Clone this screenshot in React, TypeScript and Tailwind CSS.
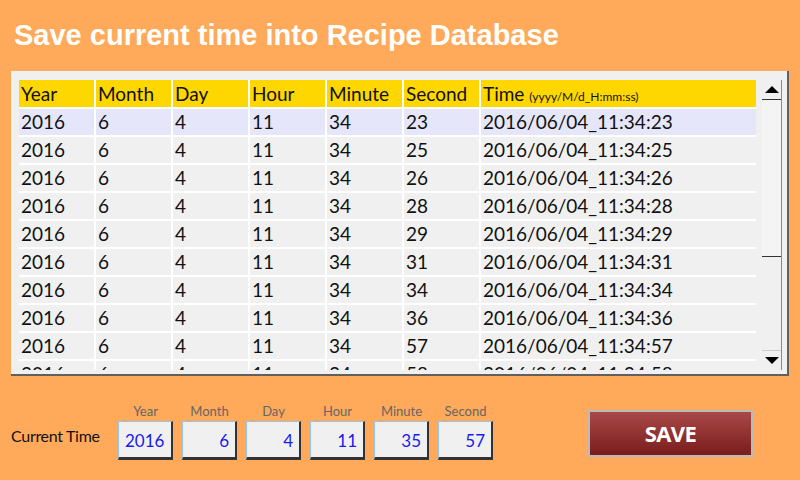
const rows = [23, 25, 26, 28, 29, 31, 34, 36, 57, 58];
const cols = ["Year", "Month", "Day", "Hour", "Minute", "Second"];
const current = [
  ["Year", "2016", "text-left"],
  ["Month", "6", "text-right"],
  ["Day", "4", "text-right"],
  ["Hour", "11", "text-right"],
  ["Minute", "35", "text-right"],
  ["Second", "57", "text-right"],
];

export default function App() {
  return (
    <div className="w-[800px] h-[480px] bg-[#ffaa5a] overflow-hidden" style={{ fontFamily: "Lato, 'Open Sans', sans-serif" }}>
      <h1 className="pl-[14px] pt-[18px] h-[71px] text-[29px] font-bold text-white leading-[34px]" style={{ fontFamily: "'Liberation Sans', Arial, sans-serif" }}>
        Save current time into Recipe Database
      </h1>
      <div className="mx-[11px] h-[305px] bg-[#f0f0f0] border-r-2 border-b-2 border-[#606060] flex pl-[8px] pt-[9px]">
        <div className="w-[737px] h-[290px] overflow-hidden">
          <div className="flex h-[27px] bg-[#ffd700] text-[19px] text-[#111]">
            {cols.map((c) => (
              <div key={c} className="w-[77px] border-r-2 border-white pl-[2px] leading-[27px]">{c}</div>
            ))}
            <div className="flex-1 pl-[2px] leading-[27px]">
              Time <span className="text-[12px]">(yyyy/M/d_H:mm:ss)</span>
            </div>
          </div>
          {rows.map((s, i) => (
            <div key={s} className={`flex h-[28px] border-t-2 border-white text-[19px] text-[#111] ${i === 0 ? "bg-[#e6e6fa]" : ""}`}>
              {["2016", "6", "4", "11", "34", String(s)].map((v, j) => (
                <div key={j} className="w-[77px] border-r-2 border-white pl-[2px] leading-[26px]">{v}</div>
              ))}
              <div className="flex-1 pl-[2px] leading-[26px]">2016/06/04_11:34:{s}</div>
            </div>
          ))}
        </div>
        <div className="ml-[6px] w-[20px] h-[290px] flex flex-col border-r border-[#888]">
          <div className="h-[20px] bg-[#f0f0f0] border-b border-[#333] flex items-center justify-center">
            <div className="w-0 h-0 border-l-[7px] border-r-[7px] border-b-[7px] border-l-transparent border-r-transparent border-b-black" />
          </div>
          <div className="h-[157px] bg-[#f4f4f4] border-b border-[#333]" />
          <div className="flex-1" />
          <div className="h-[20px] border-t border-[#ccc] flex items-center justify-center">
            <div className="w-0 h-0 border-l-[7px] border-r-[7px] border-t-[7px] border-l-transparent border-r-transparent border-t-black" />
          </div>
        </div>
      </div>
      <div className="flex items-start mt-[25px]">
        <div className="ml-[11px] mt-[23px] w-[106px] text-[16px] text-[#111] tracking-[-0.3px]">Current Time</div>
        <div className="flex gap-[9px] ml-px">
          {current.map(([l, v, a]) => (
            <div key={l} className="flex flex-col items-center">
              <div className="h-[20px] text-[13px] text-[#666] leading-[20px]">{l}</div>
              <div className={`w-[55px] h-[39px] bg-[#f0f0f0] border border-[#9cc4e8] border-b-[3px] border-r-[2px] border-b-[#333] border-r-[#333] text-[17px] text-[#1a1aee] px-[6px] leading-[38px] ${a}`}>{v}</div>
            </div>
          ))}
        </div>
        <div className="ml-auto mr-[47px] mt-[9px] w-[165px] h-[47px] border-2 border-[#bbb] bg-gradient-to-b from-[#a94848] to-[#7a1c1c] flex items-center justify-center text-white text-[22px] font-bold tracking-tight" style={{ fontFamily: "'Open Sans', sans-serif" }}>
          SAVE
        </div>
      </div>
    </div>
  );
}
